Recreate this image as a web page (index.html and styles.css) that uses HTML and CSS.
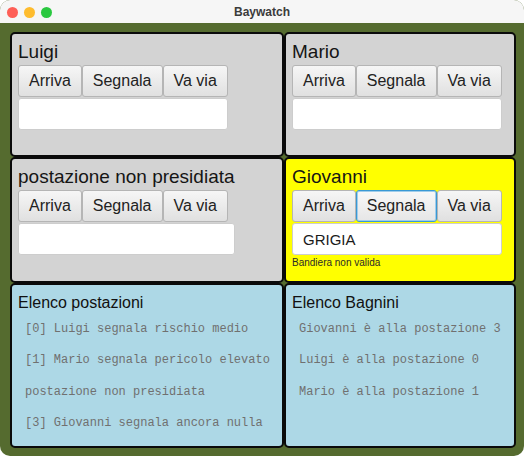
FILE: index.html
```html
<!DOCTYPE html>
<html lang="it">
<head>
<meta charset="utf-8">
<title>Baywatch</title>
<link rel="stylesheet" href="styles.css">
</head>
<body>
<div class="window">
  <div class="titlebar">
    <div class="lights">
      <span class="light red"></span>
      <span class="light yellow-light"></span>
      <span class="light green"></span>
    </div>
    <div class="title">Baywatch</div>
    <div></div>
  </div>
  <div class="content">
    <div class="grid">
      <section class="panel gray">
        <div class="box">
          <div class="name">Luigi</div>
          <div class="buttons">
            <button class="btn">Arriva</button><button class="btn">Segnala</button><button class="btn">Va via</button>
          </div>
          <div class="field"></div>
        </div>
      </section>
      <section class="panel gray">
        <div class="box">
          <div class="name">Mario</div>
          <div class="buttons">
            <button class="btn">Arriva</button><button class="btn">Segnala</button><button class="btn">Va via</button>
          </div>
          <div class="field"></div>
        </div>
      </section>
      <section class="panel gray">
        <div class="box">
          <div class="name">postazione non presidiata</div>
          <div class="buttons">
            <button class="btn">Arriva</button><button class="btn">Segnala</button><button class="btn">Va via</button>
          </div>
          <div class="field"></div>
        </div>
      </section>
      <section class="panel yellow">
        <div class="box">
          <div class="name">Giovanni</div>
          <div class="buttons">
            <button class="btn">Arriva</button><button class="btn focused">Segnala</button><button class="btn">Va via</button>
          </div>
          <div class="field">GRIGIA</div>
          <div class="hint">Bandiera non valida</div>
        </div>
      </section>
      <section class="panel blue">
        <div class="list-title">Elenco postazioni</div>
        <ul class="list">
          <li>[0] Luigi segnala rischio medio</li>
          <li>[1] Mario segnala pericolo elevato</li>
          <li>postazione non presidiata</li>
          <li>[3] Giovanni segnala ancora nulla</li>
        </ul>
      </section>
      <section class="panel blue">
        <div class="list-title">Elenco Bagnini</div>
        <ul class="list">
          <li>Giovanni è alla postazione 3</li>
          <li>Luigi è alla postazione 0</li>
          <li>Mario è alla postazione 1</li>
        </ul>
      </section>
    </div>
  </div>
</div>
</body>
</html>
```

FILE: styles.css
```css
* {
  box-sizing: border-box;
  margin: 0;
  padding: 0;
}

html,
body {
  width: 524px;
  height: 456px;
  background: #ffffff;
  overflow: hidden;
}

body {
  font-family: "Liberation Sans", Arial, sans-serif;
}

.window {
  width: 524px;
  height: 456px;
  display: flex;
  flex-direction: column;
  border-radius: 10px;
  overflow: hidden;
  background: #556b2f;
}

.titlebar {
  height: 23px;
  flex: none;
  background: #f6f6f6;
  display: grid;
  grid-template-columns: 1fr auto 1fr;
  align-items: center;
}

.lights {
  display: flex;
  gap: 6px;
  padding-left: 7px;
  padding-top: 1px;
}

.light {
  width: 11px;
  height: 11px;
  border-radius: 50%;
}

.red {
  background: #fe5f57;
}

.yellow-light {
  background: #febc2e;
}

.green {
  background: #2ac840;
}

.title {
  font-size: 12px;
  font-weight: bold;
  color: #3b3b3b;
}

.content {
  flex: 1;
  padding: 9px 8px 8px 10px;
}

.grid {
  display: grid;
  grid-template-columns: 274px 232px;
  grid-template-rows: 125px 126px 165px;
}

.panel {
  border: 2px solid #0a0a0a;
  border-radius: 5px;
  padding: 7px 6px;
}

.gray {
  background: #d3d3d3;
}

.yellow {
  background: #ffff00;
}

.blue {
  background: #add8e6;
  padding-top: 8px;
}

.box {
  display: inline-flex;
  flex-direction: column;
}

.name {
  font-size: 19px;
  line-height: 22px;
  color: #151515;
  margin-bottom: 2px;
  white-space: nowrap;
}

.buttons {
  display: flex;
}

.btn {
  font-family: "Liberation Sans", Arial, sans-serif;
  font-size: 16px;
  color: #222222;
  height: 32px;
  padding: 0 10px;
  border: 1px solid #b5b5b5;
  border-radius: 3px;
  background: linear-gradient(#f6f6f6, #e0e0e0);
  white-space: nowrap;
}

.btn.focused {
  border-color: #3a98d4;
  box-shadow: inset 0 0 0 1px #9fcdeb;
  background: linear-gradient(#f8f8f8, #e6e6e6);
}

.field {
  height: 32px;
  margin-top: 1px;
  background: #ffffff;
  border: 1px solid #cdcdcd;
  border-radius: 3px;
  font-size: 15px;
  color: #1a1a1a;
  padding: 0 10px;
  display: flex;
  align-items: center;
}

.hint {
  font-size: 10px;
  line-height: 12px;
  margin-top: 2px;
  color: #2a2a2a;
}

.list-title {
  font-size: 16px;
  line-height: 19px;
  color: #111111;
}

.list {
  list-style: none;
  padding-left: 7px;
  padding-top: 2px;
}

.list li {
  font-family: "Liberation Mono", "Courier New", monospace;
  font-size: 12px;
  line-height: 31.3px;
  color: #707070;
  white-space: pre;
}
```
